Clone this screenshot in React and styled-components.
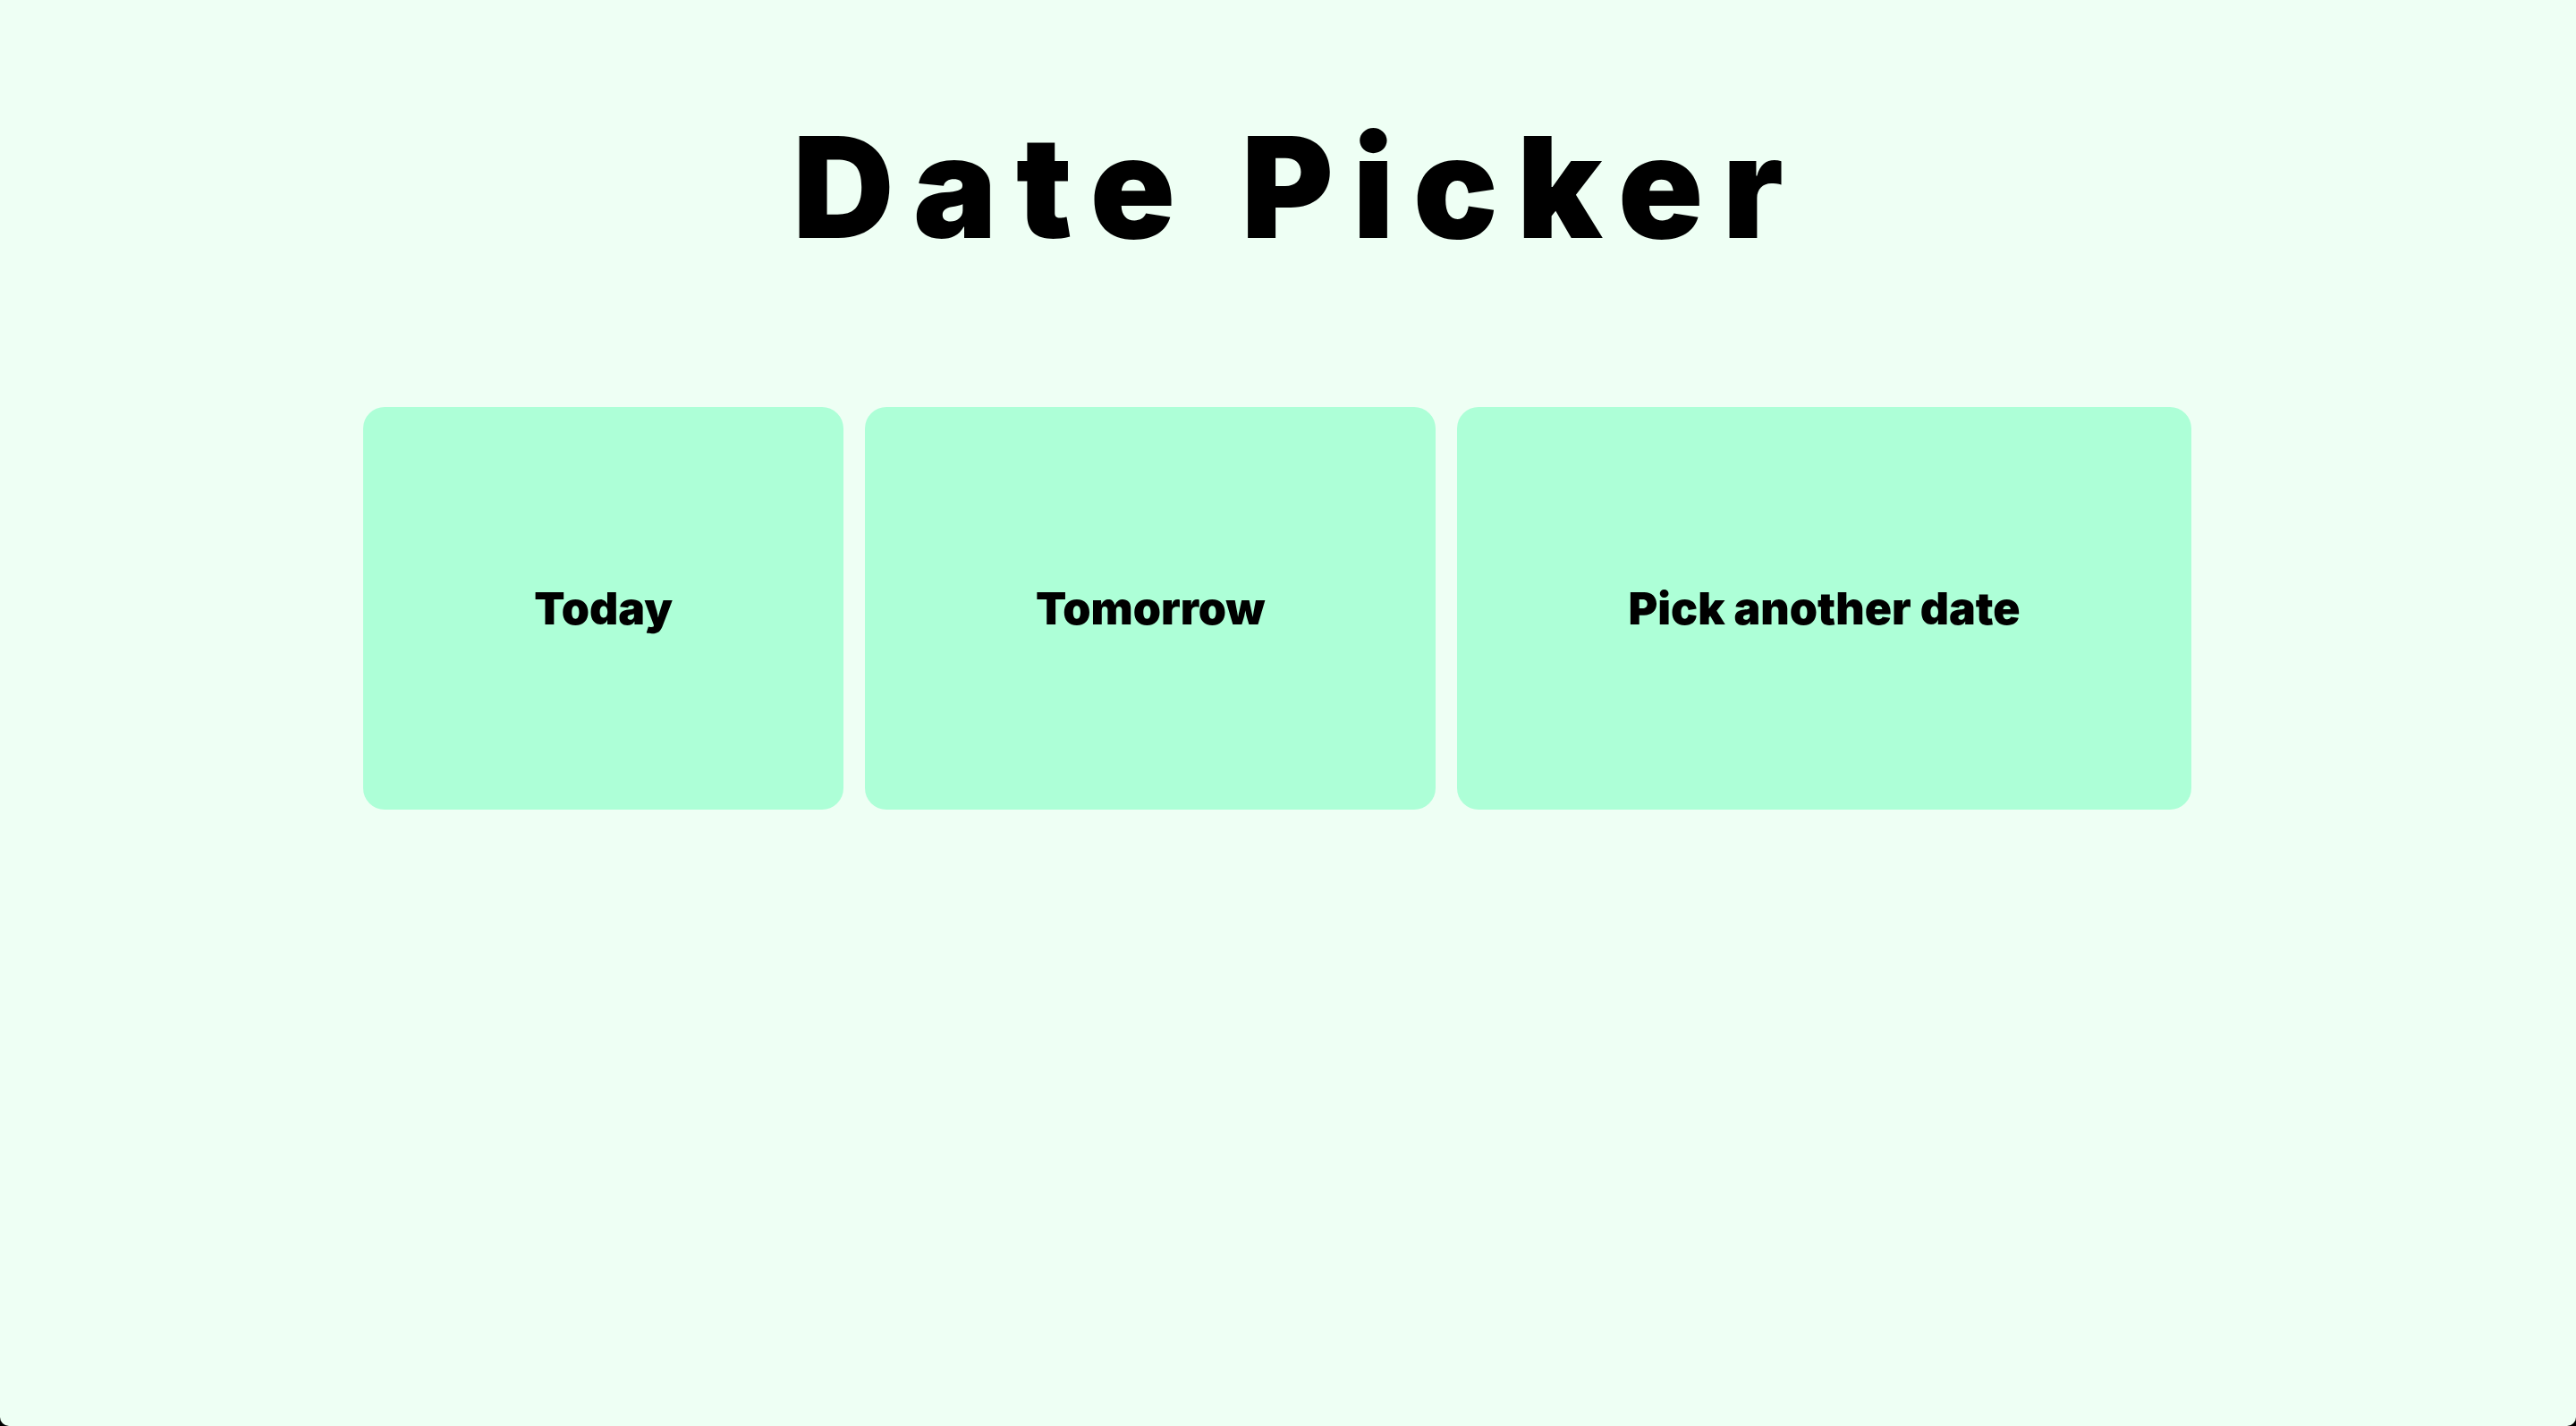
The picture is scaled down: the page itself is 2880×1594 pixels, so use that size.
import React from "react";
import styled, { createGlobalStyle } from "styled-components";

const Global = createGlobalStyle`
  html { background: #000; }
  body {
    margin: 0;
    min-height: 100vh;
    background: #eefff4;
    border-radius: 0 0 10px 10px;
    font-family: Inter, "Noto Sans", sans-serif;
    color: #000;
  }
`;

const Page = styled.main`
  display: flex;
  flex-direction: column;
  align-items: center;
  padding-top: 131px;
`;

const Title = styled.h1`
  margin: 0;
  font-size: 157px;
  line-height: 1;
  font-weight: 900;
  letter-spacing: 0.136em;
  margin-right: -0.136em;
  text-align: center;
`;

const Row = styled.div`
  display: flex;
  justify-content: center;
  margin-top: 167px;
`;

const Card = styled.button`
  display: flex;
  align-items: center;
  justify-content: center;
  height: 450px;
  padding: 0 191px;
  margin-right: 24px;
  border: none;
  border-radius: 24px;
  background: #adffd7;
  font-family: Inter, "Noto Sans", sans-serif;
  font-size: 50px;
  font-weight: 900;
  letter-spacing: 0;
  color: #000;
  cursor: pointer;
  white-space: nowrap;
`;

export default function App() {
  return (
    <>
      <Global />
      <Page>
        <Title>Date Picker</Title>
        <Row>
          <Card>Today</Card>
          <Card>Tomorrow</Card>
          <Card>Pick another date</Card>
        </Row>
      </Page>
    </>
  );
}
